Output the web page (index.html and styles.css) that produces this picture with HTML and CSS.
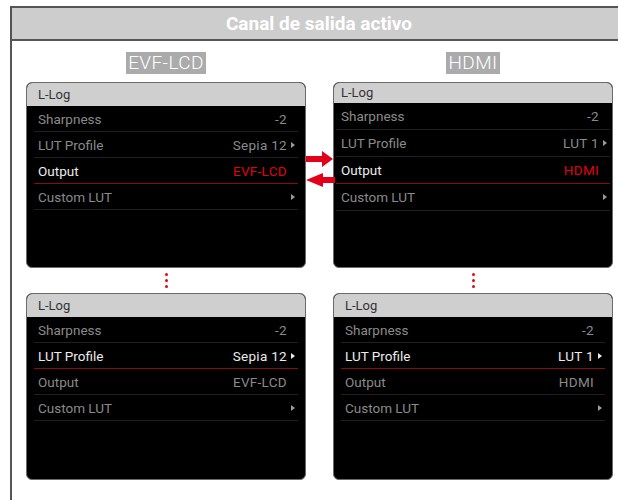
FILE: index.html
```html
<!DOCTYPE html>
<html>
<head>
<meta charset="utf-8">
<link rel="stylesheet" href="styles.css">
</head>
<body>
<div class="frame">
  <div class="frame-head">Canal de salida activo</div>
  <div class="content">
    <div class="col">
      <div class="tag">EVF-LCD</div>
      <div class="screen">
        <div class="screen-head">L-Log</div>
        <div class="row"><span class="lbl">Sharpness</span><span class="val">-2</span></div>
        <div class="row"><span class="lbl">LUT Profile</span><span class="val">Sepia 12<i class="tri"></i></span></div>
        <div class="row row--active"><span class="lbl">Output</span><span class="val val--red">EVF-LCD</span></div>
        <div class="row"><span class="lbl">Custom LUT</span><span class="val"><i class="tri"></i></span></div>
      </div>
      <div class="dots"><i></i><i></i><i></i></div>
      <div class="screen screen--low">
        <div class="screen-head">L-Log</div>
        <div class="row"><span class="lbl">Sharpness</span><span class="val">-2</span></div>
        <div class="row row--active"><span class="lbl">LUT Profile</span><span class="val">Sepia 12<i class="tri"></i></span></div>
        <div class="row"><span class="lbl">Output</span><span class="val">EVF-LCD</span></div>
        <div class="row"><span class="lbl">Custom LUT</span><span class="val"><i class="tri"></i></span></div>
      </div>
    </div>
    <div class="col">
      <div class="tag">HDMI</div>
      <div class="screen screen--b">
        <div class="screen-head">L-Log</div>
        <div class="row"><span class="lbl">Sharpness</span><span class="val">-2</span></div>
        <div class="row"><span class="lbl">LUT Profile</span><span class="val">LUT 1<i class="tri"></i></span></div>
        <div class="row row--active"><span class="lbl">Output</span><span class="val val--red">HDMI</span></div>
        <div class="row"><span class="lbl">Custom LUT</span><span class="val"><i class="tri"></i></span></div>
      </div>
      <div class="dots"><i></i><i></i><i></i></div>
      <div class="screen screen--low">
        <div class="screen-head">L-Log</div>
        <div class="row"><span class="lbl">Sharpness</span><span class="val">-2</span></div>
        <div class="row row--active"><span class="lbl">LUT Profile</span><span class="val">LUT 1<i class="tri"></i></span></div>
        <div class="row"><span class="lbl">Output</span><span class="val">HDMI</span></div>
        <div class="row"><span class="lbl">Custom LUT</span><span class="val"><i class="tri"></i></span></div>
      </div>
    </div>
    <svg class="arrows" width="32" height="40" viewBox="0 0 32 40">
      <polygon points="2,6 18,6 18,1 29,9 18,17 18,12 2,12" fill="#e2001a"/>
      <polygon points="31,27 19,27 19,23 2,30 19,37 19,33 31,33" fill="#e2001a"/>
    </svg>
  </div>
</div>
</body>
</html>
```
FILE: styles.css
```css
html, body {
  margin: 0;
  padding: 0;
  overflow: hidden;
  background: #fff;
}
body {
  width: 618px;
  height: 500px;
  font-family: Roboto, "Liberation Sans", sans-serif;
}
.frame {
  margin: 6px 0 0 10px;
  width: 606px;
  height: 492px;
  border-left: 2px solid #555;
  border-top: 2px solid #555;
  overflow: hidden;
}
.frame-head {
  width: 614px;
  height: 31px;
  line-height: 31px;
  background: #cdcdcd;
  border-bottom: 2px solid #555;
  color: #fff;
  font-weight: 700;
  font-size: 19px;
  text-align: center;
}
.content {
  position: relative;
  display: flex;
  gap: 27px;
  padding: 11px 0 0 14px;
}
.col {
  width: 280px;
  flex: none;
  display: flex;
  flex-direction: column;
}
.tag {
  align-self: center;
  height: 22px;
  line-height: 22px;
  background: #ababab;
  color: #fff;
  font-size: 19px;
  font-weight: 300;
  letter-spacing: 0.4px;
  padding: 0 2px;
  margin-bottom: 8px;
}
.screen {
  height: 186px;
  box-sizing: border-box;
  background: #000;
  border: 1px solid #6a6a6a;
  border-radius: 6px;
  overflow: hidden;
}
.screen-head {
  height: 23px;
  line-height: 23px;
  background: #cfcfcf;
  color: #333;
  font-size: 13px;
  padding-left: 11px;
  border-radius: 5px 5px 0 0;
}
.row {
  display: flex;
  align-items: center;
  height: 25px;
  margin: 0 7px;
  padding: 0 11px 0 4px;
  border-bottom: 1px solid #1f1f1f;
  color: #8a8a8a;
  font-size: 13.5px;
}
.val {
  margin-left: auto;
  display: flex;
  align-items: center;
  letter-spacing: 0.3px;
}
.tri {
  display: block;
  width: 0;
  height: 0;
  margin-left: 4px;
  margin-right: -8px;
  border-left: 4px solid #9a9a9a;
  border-top: 3px solid transparent;
  border-bottom: 3px solid transparent;
}
.row--active {
  color: #ececec;
  border-bottom-color: #8c0b0b;
}
.row--active .tri {
  border-left-color: #ececec;
}
.val--red {
  color: #e3000f;
}
.screen--b .screen-head {
  height: 20px;
  line-height: 20px;
  padding-left: 7px;
}
.screen--b .row {
  height: 26px;
  margin: 0 2px;
  padding-left: 5px;
}
.screen--low {
  height: 187px;
}
.dots {
  height: 25px;
  display: flex;
  flex-direction: column;
  align-items: center;
  justify-content: center;
  gap: 3px;
}
.dots i {
  display: block;
  width: 3px;
  height: 3px;
  border-radius: 50%;
  background: #e30613;
}
.arrows {
  position: absolute;
  left: 292px;
  top: 109px;
}
```
